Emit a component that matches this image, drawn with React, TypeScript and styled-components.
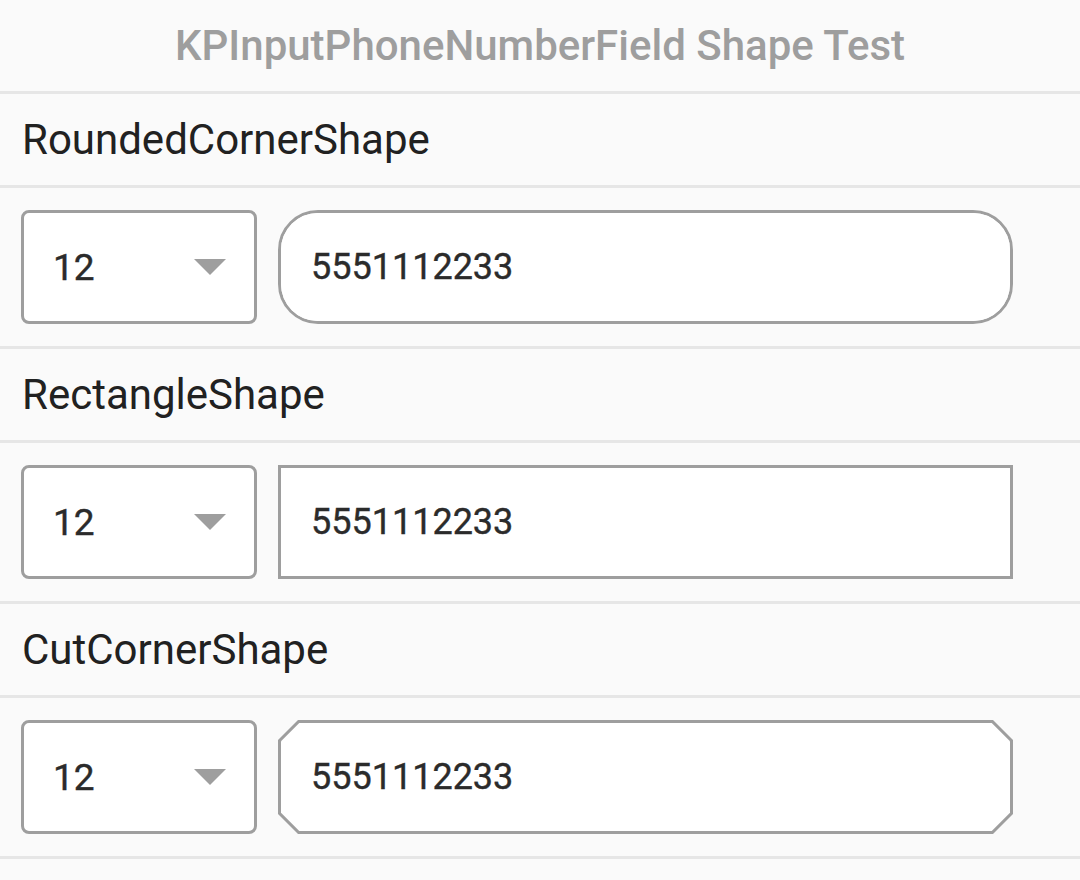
import React from "react";
import styled, { createGlobalStyle, css } from "styled-components";

const GlobalStyle = createGlobalStyle`
  html, body {
    margin: 0;
    padding: 0;
    background: #fafafa;
  }
  body {
    font-family: Roboto, "Noto Sans", sans-serif;
  }
`;

const Page = styled.div`
  width: 1080px;
  min-height: 880px;
  background: #fafafa;
  display: flex;
  flex-direction: column;
`;

const TitleBar = styled.div`
  height: 91px;
  display: flex;
  align-items: center;
  justify-content: center;
  font-size: 42px;
  font-weight: 500;
  color: #9e9e9e;
  border-bottom: 3px solid #e6e6e6;
`;

const SectionLabel = styled.div`
  height: 91px;
  display: flex;
  align-items: center;
  padding-left: 22px;
  font-size: 42px;
  color: #212121;
  border-bottom: 3px solid #e6e6e6;
`;

const FieldRow = styled.div`
  padding: 22px 21px;
  display: flex;
  align-items: center;
  gap: 21px;
  border-bottom: 3px solid #e6e6e6;
`;

const Dropdown = styled.div`
  width: 236px;
  height: 114px;
  box-sizing: border-box;
  border: 3px solid #9e9e9e;
  border-radius: 8px;
  background: #fff;
  display: flex;
  align-items: center;
  justify-content: space-between;
  padding: 0 28px 0 29px;
  font-size: 37px;
  color: #2b2b2b;
  -webkit-text-stroke: 0.4px #2b2b2b;
`;

const Arrow = styled.span`
  width: 0;
  height: 0;
  border-left: 16px solid transparent;
  border-right: 16px solid transparent;
  border-top: 16px solid #9e9e9e;
`;

type Shape = "rounded" | "rect" | "cut";

const CUT = 20;
const BW = 3;
const INNER_CUT = CUT + BW * Math.SQRT2 - 2 * BW;

const cutPolygon = (c: number) =>
  `polygon(${c}px 0, calc(100% - ${c}px) 0, 100% ${c}px, 100% calc(100% - ${c}px), calc(100% - ${c}px) 100%, ${c}px 100%, 0 calc(100% - ${c}px), 0 ${c}px)`;

const PhoneOuter = styled.div<{ $shape: Shape }>`
  width: 735px;
  height: 114px;
  box-sizing: border-box;
  display: flex;
  ${({ $shape }) =>
    $shape === "cut"
      ? css`
          background: #9e9e9e;
          padding: ${BW}px;
          clip-path: ${cutPolygon(CUT)};
        `
      : css`
          border: ${BW}px solid #9e9e9e;
          background: #fff;
          border-radius: ${$shape === "rounded" ? "40px" : "0"};
        `}
`;

const PhoneInner = styled.div<{ $shape: Shape }>`
  flex: 1;
  display: flex;
  align-items: center;
  padding-left: 30px;
  background: #fff;
  font-size: 36px;
  color: #2b2b2b;
  -webkit-text-stroke: 0.4px #2b2b2b;
  border-radius: ${({ $shape }) => ($shape === "rounded" ? "37px" : "0")};
  ${({ $shape }) =>
    $shape === "cut" &&
    css`
      clip-path: ${cutPolygon(INNER_CUT)};
    `}
`;

const sections: { label: string; shape: Shape }[] = [
  { label: "RoundedCornerShape", shape: "rounded" },
  { label: "RectangleShape", shape: "rect" },
  { label: "CutCornerShape", shape: "cut" },
];

export default function App() {
  return (
    <Page>
      <GlobalStyle />
      <TitleBar>KPInputPhoneNumberField Shape Test</TitleBar>
      {sections.map((s) => (
        <React.Fragment key={s.label}>
          <SectionLabel>{s.label}</SectionLabel>
          <FieldRow>
            <Dropdown>
              <span>12</span>
              <Arrow />
            </Dropdown>
            <PhoneOuter $shape={s.shape}>
              <PhoneInner $shape={s.shape}>5551112233</PhoneInner>
            </PhoneOuter>
          </FieldRow>
        </React.Fragment>
      ))}
    </Page>
  );
}
